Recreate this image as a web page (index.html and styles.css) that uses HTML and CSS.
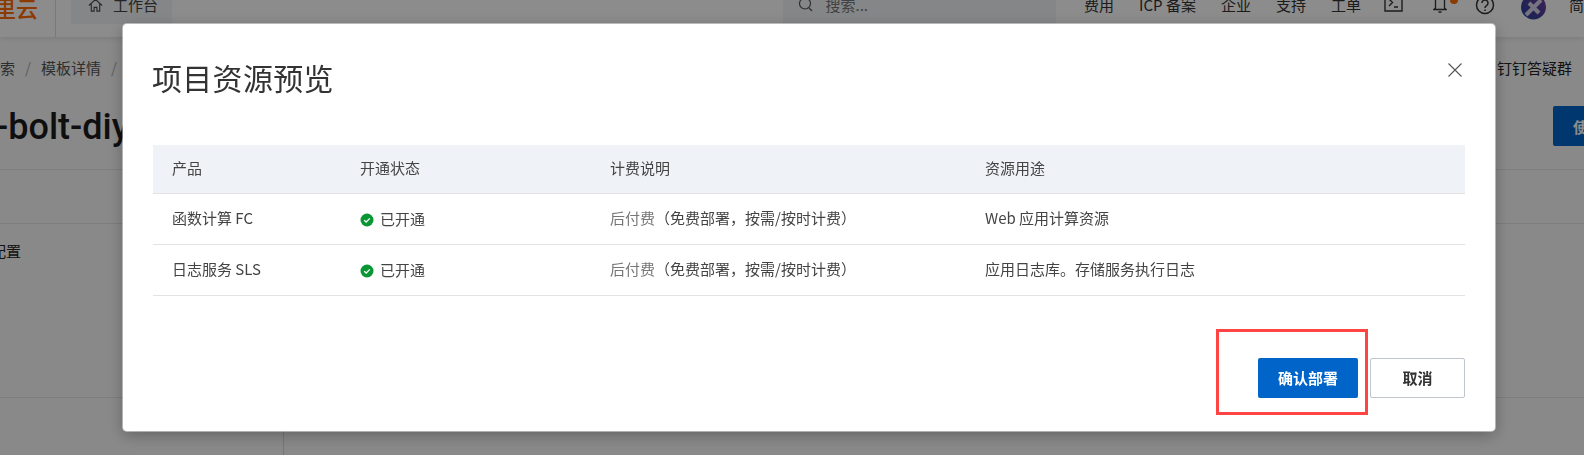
FILE: index.html
```html
<!DOCTYPE html>
<html lang="zh-CN">
<head>
<meta charset="utf-8">
<title>项目资源预览</title>
<link rel="stylesheet" href="styles.css">
</head>
<body>
<div class="page">
  <header class="topbar">
    <div class="logo">里云</div>
    <div class="nav-tab">
      <svg class="home-icon" viewBox="0 0 16 16" width="15" height="15"><path d="M1 8 8 1.500 15 8M3.500 6.500V14H6.500V10H9.500V14H12.500V6.500" fill="none" stroke="#4a4a4a" stroke-width="1.200"/></svg>
      <span>工作台</span>
    </div>
    <div class="search">
      <svg viewBox="0 0 16 16" width="16" height="16"><circle cx="7" cy="6.500" r="5.500" fill="none" stroke="#555" stroke-width="1.200"/><path d="M11 11l3 3" stroke="#555" stroke-width="1.200"/></svg>
      <span>搜索...</span>
    </div>
    <nav class="top-links">
      <span>费用</span><span>ICP 备案</span><span>企业</span><span>支持</span><span>工单</span>
      <svg class="i-term" viewBox="0 0 19 18" width="19" height="18"><path d="M1 0V17H18V0M5 5l3.500 3.500L5 12M10 13h4" fill="none" stroke="#333" stroke-width="1.400"/></svg>
      <span class="bell"><svg viewBox="0 0 14 20" width="14" height="20"><path d="M2.500 15V6a4.500 4.500 0 0 1 9 0v9l1.500 1.500H1zM5.500 19h3" fill="none" stroke="#333" stroke-width="1.300"/></svg><i class="dot"></i></span>
      <svg class="i-help" viewBox="0 0 20 20" width="20" height="20"><circle cx="10" cy="8" r="8.500" fill="none" stroke="#333" stroke-width="1.500"/><path d="M7 6a3 3 0 1 1 4.500 2.600c-1 .6-1.500 1.100-1.500 2.400M10 12.500v1.500" fill="none" stroke="#333" stroke-width="1.500"/></svg>
      <svg class="avatar" viewBox="0 0 25 30" width="25" height="30"><defs><linearGradient id="av" x1="0" y1="1" x2="1" y2="0"><stop offset="0" stop-color="#1f3f9a"/><stop offset="1" stop-color="#7a3f9c"/></linearGradient></defs><circle cx="12.500" cy="15" r="12.500" fill="url(#av)"/><path d="M5 23 20 8M8 11l10 10" stroke="#d8d4e8" stroke-width="4"/></svg>
      <span class="lang">简</span>
    </nav>
  </header>
  <div class="crumb-row">
    <div class="crumbs"><span>检索</span><i>/</i><span>模板详情</span><i>/</i></div>
    <span class="help">钉钉答疑群</span>
  </div>
  <div class="title-row">
    <h1>-bolt-diy</h1>
    <button class="use-btn">使用</button>
  </div>
  <div class="band-a"></div>
  <div class="band-b"><span>配置</span></div>
  <div class="band-c"><div class="vline"></div></div>
</div>

<div class="overlay">
  <section class="dialog">
    <div class="dialog-head">
      <h2>项目资源预览</h2>
      <svg class="close" viewBox="0 0 14 14" width="14" height="14"><path d="M.5.500l13 13M13.500.500l-13 13" stroke="#555" stroke-width="1.100"/></svg>
    </div>
    <table class="res-table">
      <colgroup><col class="c1"><col class="c2"><col class="c3"><col class="c4"></colgroup>
      <thead>
        <tr><th>产品</th><th>开通状态</th><th>计费说明</th><th>资源用途</th></tr>
      </thead>
      <tbody>
        <tr>
          <td>函数计算 FC</td>
          <td class="state"><span class="status"><svg viewBox="0 0 14 14" width="14" height="14"><circle cx="7" cy="7" r="6.500" fill="#0b9636"/><path d="M4.200 7.200 6.200 9l3.600-3.600" fill="none" stroke="#fff" stroke-width="1.300"/></svg>已开通</span></td>
          <td class="bill"><span class="muted">后付费</span>（免费部署，按需/按时计费）</td>
          <td>Web 应用计算资源</td>
        </tr>
        <tr>
          <td>日志服务 SLS</td>
          <td class="state"><span class="status"><svg viewBox="0 0 14 14" width="14" height="14"><circle cx="7" cy="7" r="6.500" fill="#0b9636"/><path d="M4.200 7.200 6.200 9l3.600-3.600" fill="none" stroke="#fff" stroke-width="1.300"/></svg>已开通</span></td>
          <td class="bill"><span class="muted">后付费</span>（免费部署，按需/按时计费）</td>
          <td>应用日志库。存储服务执行日志</td>
        </tr>
      </tbody>
    </table>
    <div class="dialog-foot">
      <span class="mark"></span>
      <button class="btn primary">确认部署</button>
      <button class="btn ghost">取消</button>
    </div>
  </section>
</div>
</body>
</html>
```
FILE: styles.css
```css
* { box-sizing: border-box; }
html, body { margin: 0; height: 455px; overflow: hidden; }
body { font-family: "Noto Sans CJK SC", "Noto Sans", sans-serif; font-size: 15px; color: #333; background: #fff; }
.page { height: 455px; display: flex; flex-direction: column; background: #fafafa; }

.topbar { height: 37px; flex: none; display: flex; align-items: flex-start; background: #fff; box-shadow: 0 1px 6px rgba(0,0,0,.12); position: relative; }
.logo { width: 64px; height: 37px; flex: none; margin-left: -8px; padding-right: 17px; border-right: 1px solid #ddd; color: #ff6a00; font-size: 22px; line-height: 14px; font-weight: 500; text-align: right; white-space: nowrap; }
.nav-tab { margin-left: 15px; width: 101px; height: 24px; background: #f3f5f7; display: flex; align-items: center; gap: 10px; padding-left: 17px; color: #444; line-height: 14px; }
.nav-tab span { margin-top: -15px; }
.home-icon { margin-top: -13px; }
.search { margin-left: 611px; width: 275px; height: 24px; background: #f3f5f7; display: flex; align-items: center; gap: 12px; padding-left: 15px; color: #777; line-height: 14px; }
.search svg { margin-top: -14px; }
.search span { margin-top: -14px; }
.top-links { display: flex; align-items: flex-start; gap: 25px; margin-left: 28px; white-space: nowrap; color: #333; line-height: 22px; margin-top: -6px; }
.i-term { margin-left: -2px; }
.bell { position: relative; display: block; width: 14px; height: 20px; margin: -1px 0 0 5px; }
.bell svg { display: block; }
.dot { position: absolute; right: -11px; top: 3px; width: 8px; height: 8px; border-radius: 50%; background: #ff6a00; }
.i-help { margin: 3px 0 0 3px; }
.avatar { margin: -2px 0 0 1px; }
.lang { margin-left: -2px; }

.crumb-row { height: 65px; flex: none; display: flex; justify-content: space-between; align-items: center; padding: 0 12px 4px 0; color: #333; }
.crumbs { display: flex; gap: 10px; margin-left: -15px; color: #555; }
.crumbs i { font-style: normal; color: #aaa; }
.help { color: #222; }
.title-row { height: 68px; flex: none; display: flex; justify-content: space-between; align-items: flex-start; border-bottom: 1px solid #e5e5e5; }
.title-row h1 { margin: 3px 0 0 -4px; font-family: Roboto, sans-serif; font-size: 36px; line-height: 44px; font-weight: 500; color: #1c1c1c; white-space: nowrap; }
.use-btn { width: 60px; height: 40px; margin: 4px -29px 0 0; border: 0; border-radius: 2px; background: #0064c8; color: #fff; font: 700 15px "Noto Sans CJK SC", sans-serif; text-align: left; padding-left: 20px; }
.band-a { height: 54px; flex: none; border-bottom: 1px solid #e5e5e5; }
.band-b { height: 174px; flex: none; border-bottom: 1px solid #e5e5e5; color: #222; }
.band-b span { display: block; margin: 17px 0 0 -9px; line-height: 20px; }
.band-c { flex: 1; display: flex; flex-direction: column; justify-content: flex-end; }
.vline { width: 284px; height: 32px; border-right: 1px solid #d8d8d8; }

.overlay { position: fixed; inset: 0; background: rgba(0,0,0,.45); }
.dialog { position: absolute; left: 123px; top: 24px; width: 1372px; height: 407px; background: #fff; border-radius: 4px; box-shadow: 0 0 0 1px rgba(255,255,255,.45), 0 4px 16px rgba(0,0,0,.3); padding: 0 30px; display: flex; flex-direction: column; }
.dialog-head { height: 121px; flex: none; display: flex; justify-content: space-between; align-items: flex-start; }
.dialog-head h2 { margin: 31px 0 0 -1px; font-size: 30px; line-height: 44px; font-weight: 400; color: #333; letter-spacing: .3px; }
.close { margin: 39px 0 0 0; position: relative; left: -3px; }
.res-table { width: 1312px; border-collapse: collapse; table-layout: fixed; font-size: 15px; color: #444; }
.c1 { width: 187px; } .c2 { width: 250px; } .c3 { width: 375px; }
.res-table th { height: 48px; background: #eff2f6; border-bottom: 1px solid #e3e3e3; font-weight: 400; text-align: left; padding: 0 0 2px 20px; color: #444; }
.res-table td { height: 51px; border-bottom: 1px solid #e3e3e3; padding: 0 0 2px 20px; white-space: nowrap; }
.res-table td.state { padding: 2px 0 0 20px; }
.res-table tr > :first-child { padding-left: 19px; }
.status { display: inline-flex; align-items: center; gap: 6px; }
.status svg { flex: none; margin-top: 2px; }
.muted { color: #777; }
.dialog-foot { flex: 1; display: flex; justify-content: flex-end; align-items: flex-start; gap: 12px; padding-top: 62px; position: relative; }
.btn { height: 40px; border-radius: 2px; font: 700 15px "Noto Sans CJK SC", sans-serif; padding: 0 0 1px; }
.primary { width: 100px; background: #0064c8; color: #fff; border: 0; }
.ghost { width: 95px; background: #fff; color: #333; border: 1px solid #c0c6cc; }
.mark { position: absolute; left: 1063px; top: 33px; width: 152px; height: 86px; border: 3px solid #ff4444; }
```
